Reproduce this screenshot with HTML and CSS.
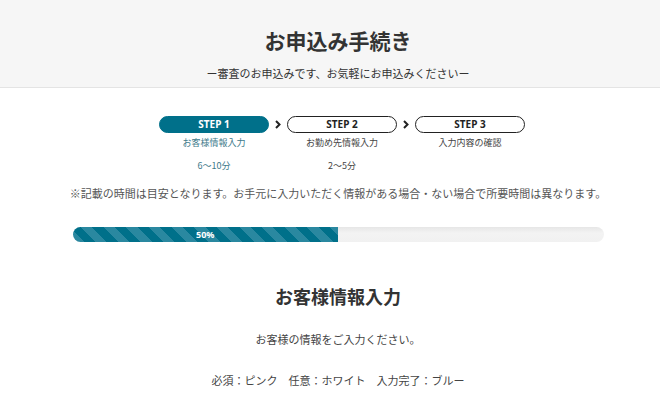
FILE: index.html
```html
<!DOCTYPE html>
<html>
  <head>
    <meta charset="utf-8">
    <title>お申込み手続き</title>
    <link rel="stylesheet" href="styles.css">
  </head>
  <body>
    <header class="page-head">
      <div class="inner">
        <h1 class="title">お申込み手続き</h1>
        <p class="lead">ー審査のお申込みです、お気軽にお申込みくださいー</p>
      </div>
    </header>

    <main class="inner">
      <div class="steps">
        <div class="step current">
          <div class="pill">STEP 1</div>
          <div class="step-label">お客様情報入力</div>
          <div class="step-time">6〜10分</div>
        </div>
        <svg class="arrow" width="8" height="17" viewBox="0 0 8 17"><path d="M2 5l3.5 3.5L2 12" fill="none" stroke="#222" stroke-width="2"/></svg>
        <div class="step">
          <div class="pill">STEP 2</div>
          <div class="step-label">お勤め先情報入力</div>
          <div class="step-time">2〜5分</div>
        </div>
        <svg class="arrow" width="8" height="17" viewBox="0 0 8 17"><path d="M2 5l3.5 3.5L2 12" fill="none" stroke="#222" stroke-width="2"/></svg>
        <div class="step">
          <div class="pill">STEP 3</div>
          <div class="step-label">入力内容の確認</div>
        </div>
      </div>

      <p class="note">※記載の時間は目安となります。お手元に入力いただく情報がある場合・ない場合で所要時間は異なります。</p>

      <div class="progress">
        <div class="progress-bar" style="width: 50%">50%</div>
      </div>

      <h2 class="section-title">お客様情報入力</h2>
      <p class="section-text">お客様の情報をご入力ください。</p>
      <p class="legend">必須：ピンク　任意：ホワイト　入力完了：ブルー</p>
    </main>
  </body>
</html>
```

FILE: styles.css
```css
body {
  margin: 0;
  color: #333;
  font-family: "Noto Sans CJK JP", "Noto Sans", sans-serif;
  background: #fff;
}
p, h1, h2 {
  margin: 0;
}
.inner {
  padding-left: 16px;
  text-align: center;
}
.page-head {
  background: #f6f6f6;
  border-bottom: 1px solid #e4e4e4;
  padding: 25px 0 6px;
}
.title {
  font-size: 21px;
  line-height: 30px;
  font-weight: bold;
  color: #333;
}
.lead {
  margin-top: 10px;
  font-size: 11px;
  line-height: 16px;
}
.steps {
  display: flex;
  justify-content: center;
  align-items: flex-start;
  gap: 5px;
  margin-top: 28px;
  padding-left: 8px;
}
.step {
  width: 110px;
}
.pill {
  height: 17px;
  box-sizing: border-box;
  border: 1px solid #222;
  border-radius: 9px;
  font-family: "Noto Sans", sans-serif;
  font-size: 10px;
  font-weight: bold;
  line-height: 15px;
  color: #222;
}
.current .pill {
  background: #00708a;
  border-color: #00708a;
  color: #fff;
}
.step-label {
  margin-top: 3px;
  font-size: 9px;
  line-height: 14px;
  color: #444;
}
.step-time {
  margin-top: 9px;
  font-size: 9px;
  line-height: 14px;
  color: #444;
}
.current .step-label,
.current .step-time {
  color: #3d7a8a;
}
.note {
  margin-top: 12px;
  font-size: 11px;
  line-height: 16px;
  color: #555;
}
.progress {
  margin: 26px auto 0;
  width: 531px;
  height: 15px;
  border-radius: 8px;
  background: linear-gradient(#e6e6e6, #f3f3f3 40%, #f1f1f1);
  overflow: hidden;
  text-align: left;
}
.progress-bar {
  height: 100%;
  background: repeating-linear-gradient(45deg, #2a88a0 0 8px, #00708a 8px 16px);
  color: #fff;
  font-family: "Noto Sans", sans-serif;
  font-size: 9px;
  font-weight: bold;
  line-height: 15px;
  text-align: center;
}
.section-title {
  margin-top: 41px;
  font-size: 18px;
  line-height: 26px;
  font-weight: bold;
  color: #333;
}
.section-text {
  margin-top: 22px;
  font-size: 11px;
  line-height: 16px;
  color: #444;
}
.legend {
  margin-top: 25px;
  font-size: 11px;
  line-height: 16px;
  color: #444;
}
```
